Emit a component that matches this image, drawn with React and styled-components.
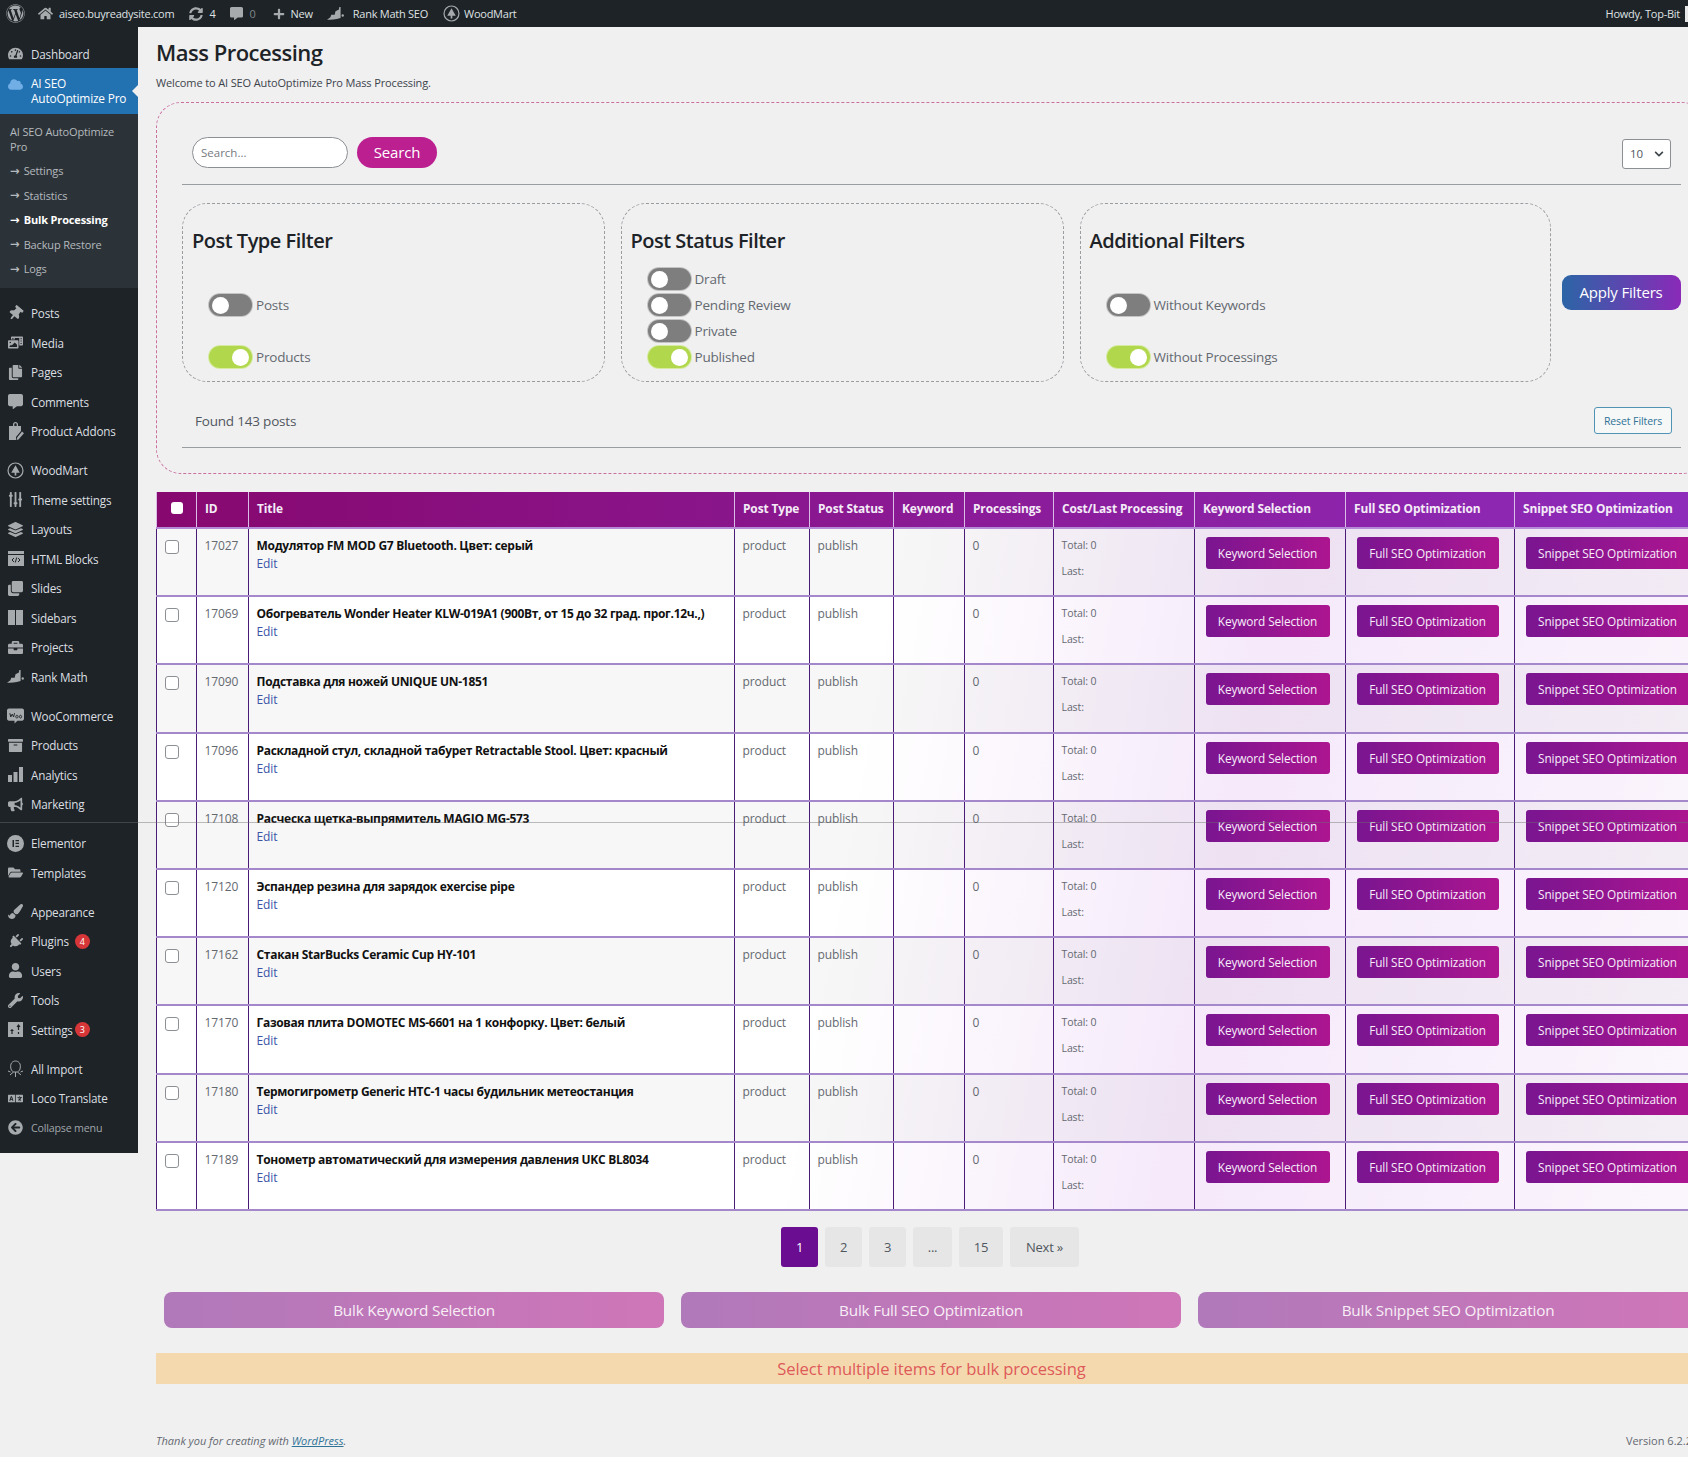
import React from 'react';
import styled, { createGlobalStyle } from 'styled-components';
import {
  FaWordpress, FaHome, FaSyncAlt, FaCommentAlt, FaPlus, FaTachometerAlt, FaCloud, FaThumbtack,
  FaPhotoVideo, FaCopy, FaSlidersH, FaLayerGroup, FaClone, FaBriefcase, FaArchive,
  FaBullhorn, FaFolderOpen, FaPaintBrush, FaPlug, FaUser, FaWrench,
  FaArrowCircleLeft, FaLanguage, FaChevronDown,
} from 'react-icons/fa';

const FONT = '"Open Sans", "Noto Sans", "Liberation Sans", sans-serif';

const GlobalStyle = createGlobalStyle`
  html, body {
    margin: 0;
    padding: 0;
    overflow: hidden;
    background: #f0f0f1;
  }
  body {
    font-family: ${FONT};
    font-size: 12px;
    color: #50575e;
  }
  * { box-sizing: border-box; }
`;

const Page = styled.div`
  position: relative;
  width: 1688px;
  height: 1457px;
  overflow: hidden;
  background: #f0f0f1;
`;

/* top admin bar */
const AdminBar = styled.div`
  display: flex;
  align-items: center;
  height: 27px;
  background: #1d2327;
  color: #dfe1e3;
  font-size: 11px;
  letter-spacing: -0.25px;
`;
const BarItem = styled.div`
  display: flex;
  align-items: center;
  gap: ${p => p.$gap || 6}px;
  margin-left: ${p => p.$left || 0}px;
  color: ${p => p.$dim ? '#80868b' : 'inherit'};
  svg { color: #a7aaad; flex: none; }
`;
const BarRight = styled.div`
  display: flex;
  align-items: center;
  gap: 5px;
  margin-left: auto;
`;
const Avatar = styled.div`
  width: 4px;
  height: 16px;
  background: #e8e8e8;
  margin-right: -1px;
`;

const Shell = styled.div`
  display: flex;
  align-items: flex-start;
`;

/* left menu */
const Sidebar = styled.nav`
  flex: none;
  width: 138px;
  height: 1126px;
  padding-top: 12px;
  background: #1d2327;
  color: #dcdfe1;
  font-size: 11.7px;
  letter-spacing: -0.2px;
`;
const MenuItem = styled.div`
  display: flex;
  align-items: center;
  height: 29.5px;
  padding-left: 7px;
  gap: 7px;
  margin-top: ${p => p.$sep ? 9.5 : 0}px;
  color: ${p => p.$dim ? '#a0a5aa' : 'inherit'};
  font-size: ${p => p.$dim ? '10.7px' : 'inherit'};
`;
const MenuIcon = styled.span`
  display: flex;
  align-items: center;
  justify-content: center;
  flex: none;
  width: 17px;
  height: 17px;
  color: #a7aaad;
  font-size: 15px;
  transform: ${p => p.$turn ? `rotate(${p.$turn}deg)` : 'none'};
`;
const Badge = styled.span`
  display: inline-flex;
  align-items: center;
  justify-content: center;
  width: 15px;
  height: 15px;
  border-radius: 50%;
  background: #d63638;
  color: #fff;
  font-size: 9px;
  margin-left: ${p => p.$left}px;
`;
const ActiveItem = styled.div`
  position: relative;
  display: flex;
  gap: 7px;
  height: 46px;
  margin-top: -1px;
  padding: 8px 0 0 7px;
  background: #2271b1;
  color: #fff;
  font-size: 11.9px;
  line-height: 15.5px;
  &::after {
    content: '';
    position: absolute;
    right: 0;
    top: 17px;
    border: 6px solid transparent;
    border-right-color: #f0f0f1;
  }
`;
const SubMenu = styled.div`
  height: 174px;
  padding-top: 10px;
  margin-bottom: 11px;
  background: #2c3338;
  color: #b4b9be;
  font-size: 11px;
  letter-spacing: -0.15px;
`;
const SubTitle = styled.div`
  padding: 0 20px 0 10px;
  line-height: 15.5px;
  margin-bottom: 4px;
`;
const SubItem = styled.div`
  display: flex;
  align-items: center;
  gap: 4px;
  height: 24.5px;
  padding-left: 10px;
  color: ${p => p.$active ? '#fff' : 'inherit'};
  font-weight: ${p => p.$active ? 700 : 400};
`;
const SubArrow = styled.span`
  font-family: "DejaVu Sans", sans-serif;
  font-size: 11.5px;
  font-weight: 700;
  letter-spacing: 0;
`;

/* main column */
const Main = styled.main`
  flex: none;
  width: 1551px;
  margin-left: 18px;
`;
const Heading = styled.h1`
  margin: 0;
  padding-top: 10px;
  height: 49px;
  font-size: 22px;
  line-height: 30px;
  font-weight: 600;
  color: #1d2327;
  letter-spacing: -0.5px;
`;
const Welcome = styled.p`
  margin: 0;
  height: 26px;
  font-size: 11px;
  line-height: 14px;
  letter-spacing: -0.13px;
  color: #3c434a;
`;
const FilterPanel = styled.section`
  height: 372px;
  padding: 33px 25px 0;
  border: 1px dashed #c9709f;
  border-radius: 25px;
`;
const SearchRow = styled.div`
  display: flex;
  align-items: center;
  height: 32px;
  padding: 0 10px 0 10px;
  gap: 9px;
`;
const SearchInput = styled.input`
  width: 156px;
  height: 31px;
  padding: 0 8px;
  border: 1px solid #8c8f94;
  border-radius: 16px;
  background: #fff;
  font: 11.5px ${FONT};
  &::placeholder { color: #757b80; }
`;
const SearchButton = styled.button`
  width: 80px;
  height: 31px;
  border: 0;
  border-radius: 16px;
  background: #bb1f90;
  color: #fff;
  font: 15px ${FONT};
  letter-spacing: -0.2px;
`;
const PerPage = styled.div`
  display: flex;
  align-items: center;
  justify-content: space-between;
  width: 49px;
  height: 30px;
  margin: 3px 0 0 auto;
  padding: 0 6px 0 7px;
  background: #fff;
  border: 1px solid #8c8f94;
  border-radius: 3px;
  font-size: 11.5px;
  svg { color: #3c434a; }
`;
const Rule = styled.hr`
  height: 1px;
  margin: ${p => p.$top}px 0 ${p => p.$bottom}px;
  border: 0;
  background: #9a9da0;
`;
const FilterRow = styled.div`
  display: flex;
  align-items: center;
  gap: 16px;
`;
const FilterBox = styled.div`
  flex: none;
  width: ${p => p.$width}px;
  height: 179px;
  padding: 24px 9px 0;
  border: 1px dashed #9a9da0;
  border-radius: 25px;
`;
const FilterTitle = styled.h3`
  margin: 0;
  height: 26px;
  font-size: 20px;
  line-height: 26px;
  font-weight: 600;
  color: #1d2327;
  letter-spacing: -0.5px;
`;
const ToggleList = styled.div`
  display: flex;
  flex-direction: column;
  gap: ${p => p.$gap}px;
  margin-top: ${p => p.$top}px;
  padding-left: 17px;
`;
const ToggleRow = styled.div`
  display: flex;
  align-items: center;
  gap: 4px;
  height: 22px;
  font-size: 13.5px;
  letter-spacing: -0.2px;
  color: #646970;
`;
const Track = styled.span`
  display: flex;
  align-items: center;
  justify-content: ${p => p.$on ? 'flex-end' : 'flex-start'};
  width: 43px;
  height: 22px;
  padding: 0 3px;
  border-radius: 11px;
  background: ${p => p.$on ? '#b1d84d' : '#7e7e7e'};
  box-shadow: 0 0 0 1px ${p => p.$on ? '#d6eaa0' : '#c4c4c4'};
`;
const Knob = styled.span`
  width: 17px;
  height: 17px;
  border-radius: 50%;
  background: #fff;
`;
const ApplyButton = styled.button`
  flex: none;
  width: 119px;
  height: 35px;
  margin: -1px 0 0 -5px;
  border: 0;
  border-radius: 9px;
  background: linear-gradient(90deg, #2b65a6, #8a2ab8);
  color: #fff;
  font: 15px ${FONT};
  letter-spacing: -0.17px;
`;
const FoundRow = styled.div`
  display: flex;
  align-items: center;
  justify-content: space-between;
  height: 27px;
  margin-top: 25px;
  padding: 0 9px 0 13px;
  font-size: 13.5px;
  letter-spacing: -0.2px;
  color: #50575e;
`;
const ResetButton = styled.button`
  width: 78px;
  height: 27px;
  border: 1px solid #4f94b4;
  border-radius: 3px;
  background: #f6f7f7;
  color: #2f7396;
  font: 10.5px ${FONT};
  letter-spacing: -0.1px;
`;

/* posts table */
const PostsTable = styled.table`
  width: 1546px;
  margin-top: 18px;
  border-collapse: collapse;
  table-layout: fixed;
  background: linear-gradient(100deg, #fff 45%, #f5e9fa 68%, #fbf6fd 100%);
  border-left: 1px solid #7a4aa8;
  border-bottom: 2px solid #9a78c4;
`;
const Col = styled.col`
  width: ${p => p.$width}px;
`;
const HeadRow = styled.tr`
  height: 36px;
  background: linear-gradient(90deg, #87086f, #8e2cbc);
`;
const HeadCell = styled.th`
  padding: 0 8px 3px;
  border-left: 1px solid #d9bde6;
  border-bottom: 2px solid #b58ad6;
  color: #f4ecf7;
  font-size: 11.9px;
  font-weight: 700;
  text-align: left;
  letter-spacing: -0.1px;
  white-space: nowrap;
`;
const HeadCheck = styled.span`
  display: block;
  width: 12px;
  height: 12px;
  margin: 0 auto;
  border-radius: 3px;
  background: #fff;
`;
const BodyRow = styled.tr`
  height: 68.2px;
  background: ${p => p.$odd ? 'rgba(60, 60, 70, 0.045)' : 'transparent'};
`;
const Cell = styled.td`
  padding: 8px 7.5px 0;
  vertical-align: top;
  border-left: 1px solid #4a1c78;
  border-bottom: 2px solid #a587cc;
  font-size: 12px;
  line-height: 17px;
  letter-spacing: -0.1px;
  color: #646970;
`;
const RowCheck = styled.span`
  display: block;
  width: 14px;
  height: 14px;
  margin-top: 3px;
  border: 1px solid #8c8f94;
  border-radius: 3px;
  background: #fff;
`;
const PostTitle = styled.div`
  font-weight: 700;
  color: #111;
  letter-spacing: -0.3px;
  white-space: nowrap;
`;
const EditLink = styled.a`
  display: block;
  margin-top: 1px;
  color: #3a54a8;
`;
const CostLine = styled.div`
  height: 26px;
  font-size: 10.5px;
`;
const RowButton = styled.button`
  display: block;
  width: ${p => p.$width}px;
  height: 32px;
  margin-left: 3px;
  border: 0;
  border-radius: 3px;
  background: linear-gradient(90deg, #7a1590, #ad1590);
  color: #f7eefa;
  font: 11.8px ${FONT};
  letter-spacing: -0.1px;
  white-space: nowrap;
  padding: 0;
`;

/* bottom of the page */
const Pagination = styled.div`
  display: flex;
  justify-content: flex-start;
  gap: 7px;
  margin: 16px 0 25px 625px;
`;
const PageLink = styled.span`
  display: flex;
  align-items: center;
  justify-content: center;
  width: ${p => p.$width}px;
  height: 40px;
  border-radius: 3px;
  background: ${p => p.$current ? '#6a0d91' : '#e6e6e6'};
  color: ${p => p.$current ? '#fff' : '#50575e'};
  font-size: 13px;
  letter-spacing: -0.2px;
`;
const BulkRow = styled.div`
  display: flex;
  gap: 17px;
  padding-left: 8px;
`;
const BulkButton = styled.button`
  flex: none;
  width: 500px;
  height: 36px;
  border: 0;
  border-radius: 8px;
  background: linear-gradient(90deg, #b079ba, #cf76b8);
  color: #f8eef6;
  font: 15.3px ${FONT};
  letter-spacing: -0.2px;
`;
const Notice = styled.div`
  display: flex;
  align-items: center;
  justify-content: center;
  height: 31px;
  margin-top: 25px;
  background: #f5d9ae;
  color: #de5a5a;
  font-size: 16.6px;
  letter-spacing: -0.1px;
`;
const Footer = styled.footer`
  display: flex;
  justify-content: space-between;
  margin-top: 50px;
  padding-right: 15px;
  font-size: 11px;
  line-height: 14px;
  color: #646970;
  a { color: #2f7396; text-decoration: underline; }
`;
const Thanks = styled.span`
  font-style: italic;
`;
const ScanLine = styled.div`
  position: absolute;
  left: 0;
  right: 0;
  top: 822px;
  height: 1px;
  background: rgba(110, 110, 110, 0.45);
  pointer-events: none;
`;

/* icons that the packages do not have */
const RankMathIcon = ({ size = 17 }) => (
  <svg width={size} height={size * 0.8} viewBox="0 0 20 16" fill="currentColor">
    <path d="M0 15 L4 12 L5 9 L9 9 L10 5 L14 3 L14.5 0 L16 0 L16 13 C10 15 4 15 0 15Z" />
    <circle cx="18.5" cy="10" r="1.4" />
  </svg>
);
const TreeIcon = ({ size = 17 }) => (
  <svg width={size} height={size} viewBox="0 0 20 20" fill="none">
    <circle cx="10" cy="10" r="8.8" stroke="currentColor" strokeWidth="1.4" />
    <path d="M10 3.8 L15 12.5 H11 V16 H9 V12.5 H5Z" fill="currentColor" />
  </svg>
);
const AddonsIcon = () => (
  <svg width="16" height="18" viewBox="0 0 16 18" fill="currentColor">
    <path d="M5 4V2.5C5 1 6 0 7.5 0S10 1 10 2.5V4H13V9L8 15V18H1V4ZM6.3 4H8.7V2.5C8.7 1.8 8.2 1.3 7.5 1.3S6.3 1.8 6.3 2.5Z" />
    <path d="M14 9.5L16 11.3L10.5 17.5L8.6 18L9 15.8Z" />
  </svg>
);
const HtmlIcon = () => (
  <svg width="16" height="15" viewBox="0 0 16 15">
    <path fill="currentColor" d="M0 0H16V15H0Z" />
    <path fill="#1d2327" d="M0 3H16V4H0Z" />
    <path stroke="#1d2327" strokeWidth="1" fill="none" d="M6 7L4 9L6 11M10 7L12 9L10 11M8.7 6.5L7.3 11.5" />
  </svg>
);
const SidebarsIcon = () => (
  <svg width="15" height="15" viewBox="0 0 15 15" fill="currentColor">
    <path d="M0 0H7V15H0ZM8 0H15V15H8Z" />
  </svg>
);
const AnalyticsIcon = () => (
  <svg width="15" height="15" viewBox="0 0 15 15" fill="currentColor">
    <path d="M0 8H4V15H0ZM5.500 5H9.500V15H5.500ZM11 0H15V15H11Z" />
  </svg>
);
const WooIcon = () => (
  <svg width="18" height="16" viewBox="0 0 18 16">
    <path fill="currentColor" d="M2 0H16C17 0 18 1 18 2V11C18 12 17 13 16 13H11L8 16V13H2C1 13 0 12 0 11V2C0 1 1 0 2 0Z" />
    <path stroke="#1d2327" strokeWidth="1" fill="none" d="M3 5L4 9L5.5 6L7 9L8 5M10.5 7.2a1.2 1.5 0 1 0 .01 0M14.3 7.2a1.2 1.5 0 1 0 .01 0" />
  </svg>
);
const ElementorIcon = () => (
  <svg width="17" height="17" viewBox="0 0 17 17">
    <circle cx="8.5" cy="8.5" r="8.5" fill="currentColor" />
    <path fill="#1d2327" d="M5.5 5H7V12H5.5ZM8.5 5H12V6.3H8.5ZM8.5 7.8H12V9.1H8.5ZM8.5 10.7H12V12H8.5Z" />
  </svg>
);
const SettingsIcon = () => (
  <svg width="15" height="15" viewBox="0 0 15 15">
    <path fill="currentColor" d="M0 0H15V15H0Z" />
    <path stroke="#1d2327" strokeWidth="1.2" fill="none" d="M4 12V7M2.5 8.5H5.5M10.5 3V8M9 5L10.5 3L12 5M10.5 10V12" />
  </svg>
);
const ImportIcon = () => (
  <svg width="17" height="18" viewBox="0 0 17 18" fill="none" stroke="currentColor" strokeWidth="1">
    <path d="M4 9C2.5 3 6 1 8.5 1S14.500 3 13 9C12.500 11 11 11.500 10.500 12H6.500C6 11.500 4.500 11 4 9Z" />
    <path d="M6.500 12L3 15M10.500 12L14 15M8.500 12V17M1 11L3.500 12M16 11L13.500 12" />
  </svg>
);

// label, icon, optional badge number and its offset, optional icon turn
const menuGroups = [
  [
    ['Posts', <FaThumbtack />, null, 0, 40], ['Media', <FaPhotoVideo />], ['Pages', <FaCopy />],
    ['Comments', <FaCommentAlt />], ['Product Addons', <AddonsIcon />],
  ],
  [
    ['WoodMart', <TreeIcon />], ['Theme settings', <FaSlidersH />, null, 0, 90],
    ['Layouts', <FaLayerGroup />], ['HTML Blocks', <HtmlIcon />], ['Slides', <FaClone />],
    ['Sidebars', <SidebarsIcon />], ['Projects', <FaBriefcase />], ['Rank Math', <RankMathIcon />],
  ],
  [
    ['WooCommerce', <WooIcon />], ['Products', <FaArchive />], ['Analytics', <AnalyticsIcon />],
    ['Marketing', <FaBullhorn />],
  ],
  [['Elementor', <ElementorIcon />], ['Templates', <FaFolderOpen />]],
  [
    ['Appearance', <FaPaintBrush />], ['Plugins', <FaPlug />, 4, 6, 45], ['Users', <FaUser />],
    ['Tools', <FaWrench />], ['Settings', <SettingsIcon />, 3, 2],
  ],
  [['All Import', <ImportIcon />], ['Loco Translate', <FaLanguage />]],
];

const subLinks = ['Settings', 'Statistics', 'Bulk Processing', 'Backup Restore', 'Logs'];

const posts = [
  [17027, 'Модулятор FM MOD G7 Bluetooth. Цвет: серый'],
  [17069, 'Обогреватель Wonder Heater KLW-019A1 (900Вт, от 15 до 32 град. прог.12ч.,)'],
  [17090, 'Подставка для ножей UNIQUE UN-1851'],
  [17096, 'Раскладной стул, складной табурет Retractable Stool. Цвет: красный'],
  [17108, 'Расческа щетка-выпрямитель MAGIO MG-573'],
  [17120, 'Эспандер резина для зарядок exercise pipe'],
  [17162, 'Стакан StarBucks Ceramic Cup HY-101'],
  [17170, 'Газовая плита DOMOTEC MS-6601 на 1 конфорку. Цвет: белый'],
  [17180, 'Термогигрометр Generic HTC-1 часы будильник метеостанция'],
  [17189, 'Тонометр автоматический для измерения давления UKC BL8034'],
];

const columns = [
  [40, ''], [52, 'ID'], [486, 'Title'], [75, 'Post Type'], [84, 'Post Status'], [71, 'Keyword'],
  [89, 'Processings'], [141, 'Cost/Last Processing'], [151, 'Keyword Selection'],
  [169, 'Full SEO Optimization'], [188, 'Snippet SEO Optimization'],
];

const filters = [
  { title: 'Post Type Filter', width: 422.5, gap: 30, top: 40, items: [['Posts', false], ['Products', true]] },
  {
    title: 'Post Status Filter', width: 443, gap: 4, top: 14,
    items: [['Draft', false], ['Pending Review', false], ['Private', false], ['Published', true]],
  },
  {
    title: 'Additional Filters', width: 471, gap: 30, top: 40,
    items: [['Without Keywords', false], ['Without Processings', true]],
  },
];

const pages = [['1', 37, true], ['2', 37], ['3', 37], ['...', 39], ['15', 44], ['Next »', 69]];

function App() {
  return (
    <Page>
      <GlobalStyle />
      <AdminBar>
        <BarItem $left={6}><FaWordpress size={19} /></BarItem>
        <BarItem $left={13}><FaHome size={15} />aiseo.buyreadysite.com</BarItem>
        <BarItem $left={15}><FaSyncAlt size={14} />4</BarItem>
        <BarItem $left={15} $dim><FaCommentAlt size={13} />0</BarItem>
        <BarItem $left={17}><FaPlus size={12} />New</BarItem>
        <BarItem $left={14} $gap={9}><RankMathIcon />Rank Math SEO</BarItem>
        <BarItem $left={15} $gap={4}><TreeIcon />WoodMart</BarItem>
        <BarRight>Howdy, Top-Bit<Avatar /></BarRight>
      </AdminBar>
      <Shell>
        <Sidebar>
          <MenuItem><MenuIcon><FaTachometerAlt /></MenuIcon>Dashboard</MenuItem>
          <ActiveItem>
            <MenuIcon><FaCloud color="#72aee6" /></MenuIcon>
            <span>AI SEO<br />AutoOptimize Pro</span>
          </ActiveItem>
          <SubMenu>
            <SubTitle>AI SEO AutoOptimize Pro</SubTitle>
            {subLinks.map(l => (
              <SubItem key={l} $active={l === 'Bulk Processing'}><SubArrow>→</SubArrow>{l}</SubItem>
            ))}
          </SubMenu>
          {menuGroups.map((group, g) => group.map(([label, icon, badge, left, turn], i) => (
            <MenuItem key={label + g} $sep={i === 0 && g > 0}>
              <MenuIcon $turn={turn}>{icon}</MenuIcon>
              <span>{label}</span>
              {badge && <Badge $left={left - 7}>{badge}</Badge>}
            </MenuItem>
          )))}
          <MenuItem $dim><MenuIcon><FaArrowCircleLeft /></MenuIcon>Collapse menu</MenuItem>
        </Sidebar>

        <Main>
          <Heading>Mass Processing</Heading>
          <Welcome>Welcome to AI SEO AutoOptimize Pro Mass Processing.</Welcome>

          <FilterPanel>
            <SearchRow>
              <SearchInput placeholder="Search..." />
              <SearchButton>Search</SearchButton>
              <PerPage>10<FaChevronDown size={10} /></PerPage>
            </SearchRow>
            <Rule $top={16} $bottom={18} />
            <FilterRow>
              {filters.map(f => (
                <FilterBox key={f.title} $width={f.width}>
                  <FilterTitle>{f.title}</FilterTitle>
                  <ToggleList $gap={f.gap} $top={f.top}>
                    {f.items.map(([label, on]) => (
                      <ToggleRow key={label}>
                        <Track $on={on}><Knob /></Track>
                        {label}
                      </ToggleRow>
                    ))}
                  </ToggleList>
                </FilterBox>
              ))}
              <ApplyButton>Apply Filters</ApplyButton>
            </FilterRow>
            <FoundRow>
              <span>Found 143 posts</span>
              <ResetButton>Reset Filters</ResetButton>
            </FoundRow>
            <Rule $top={13} $bottom={0} />
          </FilterPanel>

          <PostsTable>
            <colgroup>
              {columns.map(([w], i) => <Col key={i} $width={w} />)}
            </colgroup>
            <thead>
              <HeadRow>
                {columns.map(([, label], i) => (
                  <HeadCell key={i}>{i === 0 ? <HeadCheck /> : label}</HeadCell>
                ))}
              </HeadRow>
            </thead>
            <tbody>
              {posts.map(([id, title], i) => (
                <BodyRow key={id} $odd={i % 2 === 0}>
                  <Cell><RowCheck /></Cell>
                  <Cell>{id}</Cell>
                  <Cell>
                    <PostTitle>{title}</PostTitle>
                    <EditLink>Edit</EditLink>
                  </Cell>
                  <Cell>product</Cell>
                  <Cell>publish</Cell>
                  <Cell />
                  <Cell>0</Cell>
                  <Cell>
                    <CostLine>Total: 0</CostLine>
                    <CostLine>Last:</CostLine>
                  </Cell>
                  <Cell><RowButton $width={124}>Keyword Selection</RowButton></Cell>
                  <Cell><RowButton $width={142}>Full SEO Optimization</RowButton></Cell>
                  <Cell><RowButton $width={164}>Snippet SEO Optimization</RowButton></Cell>
                </BodyRow>
              ))}
            </tbody>
          </PostsTable>

          <Pagination>
            {pages.map(([label, w, current]) => (
              <PageLink key={label} $width={w} $current={current}>{label}</PageLink>
            ))}
          </Pagination>

          <BulkRow>
            <BulkButton>Bulk Keyword Selection</BulkButton>
            <BulkButton>Bulk Full SEO Optimization</BulkButton>
            <BulkButton>Bulk Snippet SEO Optimization</BulkButton>
          </BulkRow>

          <Notice>Select multiple items for bulk processing</Notice>

          <Footer>
            <Thanks>Thank you for creating with <a>WordPress</a>.</Thanks>
            <span>Version 6.2.2</span>
          </Footer>
        </Main>
      </Shell>
      <ScanLine />
    </Page>
  );
}

export default App;
